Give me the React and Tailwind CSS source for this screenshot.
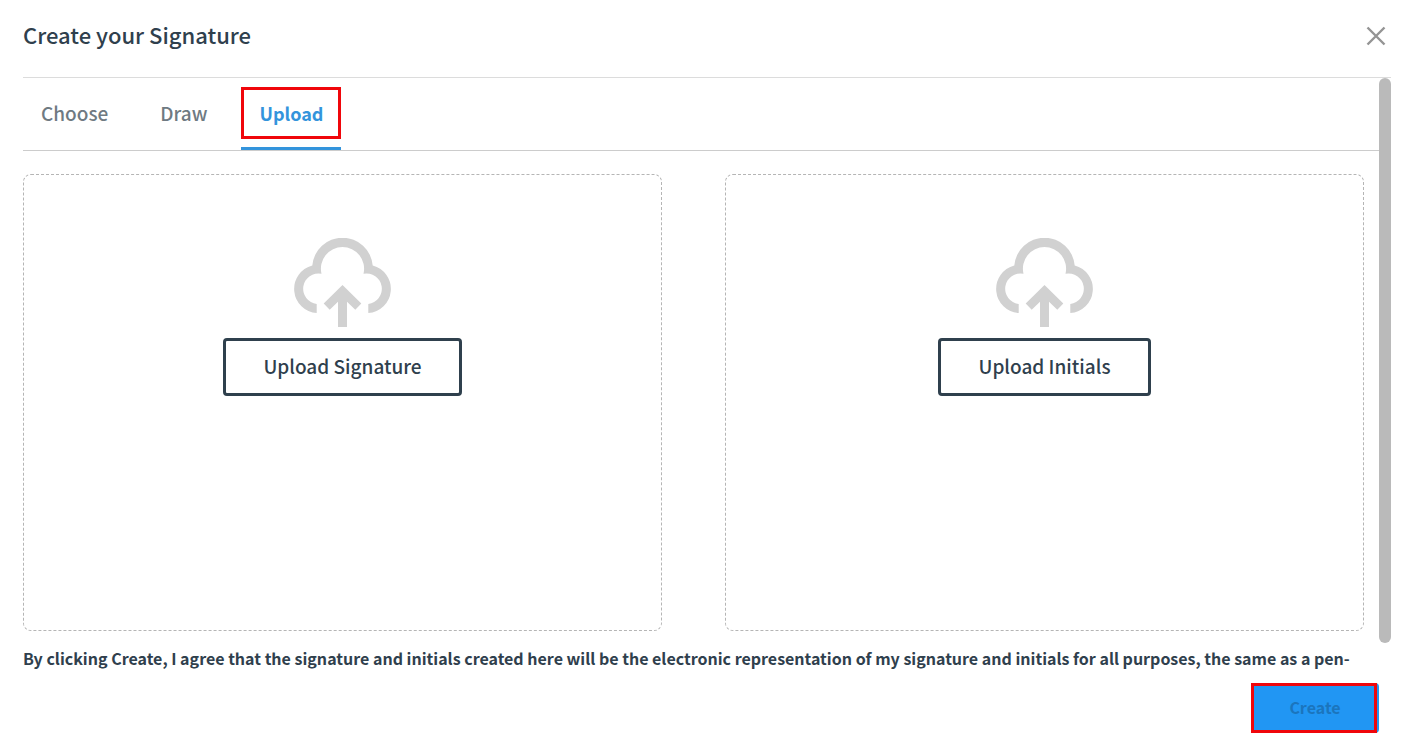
import React, { useState } from 'react';

const TABS = ['Choose', 'Draw', 'Upload'];

const CloudUploadIcon = () => (
    <svg width="97" height="89" viewBox="0 0 97 89" fill="#d1d1d1" aria-hidden="true">
        <path d="M22.7 75A24.1 24.1 0 0 1 18.3 27.6A30.3 30.3 0 0 1 78.7 27.6A24.1 24.1 0 0 1 74.3 75V66A15.35 15.35 0 1 0 69.5 35.7A21.6 21.6 0 1 0 27.5 35.7A15.35 15.35 0 1 0 22.7 66Z" />
        <path d="M48.5 47L67.3 65.5L61.3 71.7L53 63.7V89H44V63.7L35.7 71.7L29.7 65.5Z" />
    </svg>
);

const CloseIcon = () => (
    <svg width="20" height="20" viewBox="0 0 20 20" fill="none" stroke="#949494" strokeWidth="2.4" aria-hidden="true">
        <path d="M1.5 1.5L18.5 18.5M18.5 1.5L1.5 18.5" />
    </svg>
);

// Red frame drawn over the control it points out
const Highlight = ({ className }) => (
    <span className={`pointer-events-none absolute border-[3px] border-[#f0060b] ${className}`} />
);

const UploadBox = ({ label }) => (
    <div className="flex min-h-[457px] flex-col items-center gap-[11px] rounded-lg border border-dashed border-[#b5b5b5] pt-[63px]">
        <CloudUploadIcon />
        <button
            type="button"
            className="h-[58px] rounded border-[3px] border-[#2f404d] bg-white px-[37px] pb-0.5 text-[19px] font-medium"
        >
            {label}
        </button>
    </div>
);

const App = () => {
    const [activeTab, setActiveTab] = useState('Upload');

    return (
        <div className="bg-white pr-7 pl-[23px] font-['Noto_Sans_CJK_SC','Noto_Sans',sans-serif] font-medium text-[#2f404d]">
            {/* Header */}
            <header className="flex h-[78px] items-center justify-between border-b border-[#dcdcdc] pr-[5px] pb-[5px]">
                <h1 className="pb-1 text-[22px] leading-8">Create your Signature</h1>
                <button type="button" aria-label="Close">
                    <CloseIcon />
                </button>
            </header>

            {/* Body with its scroll thumb */}
            <div className="flex">
                <main className="min-w-0 flex-1">
                    <div role="tablist" className="flex h-[73px] gap-4 border-b border-[#cccccc]">
                        {TABS.map((tab) => (
                            <button
                                key={tab}
                                type="button"
                                role="tab"
                                aria-selected={tab === activeTab}
                                onClick={() => setActiveTab(tab)}
                                className={`relative border-b-[3px] px-[18px] pt-0.5 ${
                                    tab === activeTab
                                        ? 'border-[#3394dc] text-[18px] font-bold text-[#3394dc]'
                                        : 'border-transparent text-[19px] text-[#6f7a82]'
                                }`}
                            >
                                {tab}
                                {tab === 'Upload' && <Highlight className="inset-x-0 top-[9px] bottom-2" />}
                            </button>
                        ))}
                    </div>
                    <div className="grid grid-cols-2 gap-[63px] pt-[23px] pr-[15px]">
                        <UploadBox label="Upload Signature" />
                        <UploadBox label="Upload Initials" />
                    </div>
                    <p className="pt-[15px] text-[16px] leading-6 font-bold">
                        By clicking Create, I agree that the signature and initials created here will be the electronic
                        representation of my signature and initials for all purposes, the same as a pen-
                    </p>
                </main>
                <div className="mb-[27px] w-3 rounded-full bg-[#bababa]" />
            </div>

            {/* Footer */}
            <footer className="flex justify-end pt-[13px] pr-3">
                <button
                    type="button"
                    className="relative h-[50px] w-32 rounded bg-[#2196f3] pb-0.5 text-[16px] font-bold text-[#1b75bd]"
                >
                    Create
                    <Highlight className="inset-y-0 right-0.5 left-0" />
                </button>
            </footer>
        </div>
    );
};

export default App;
